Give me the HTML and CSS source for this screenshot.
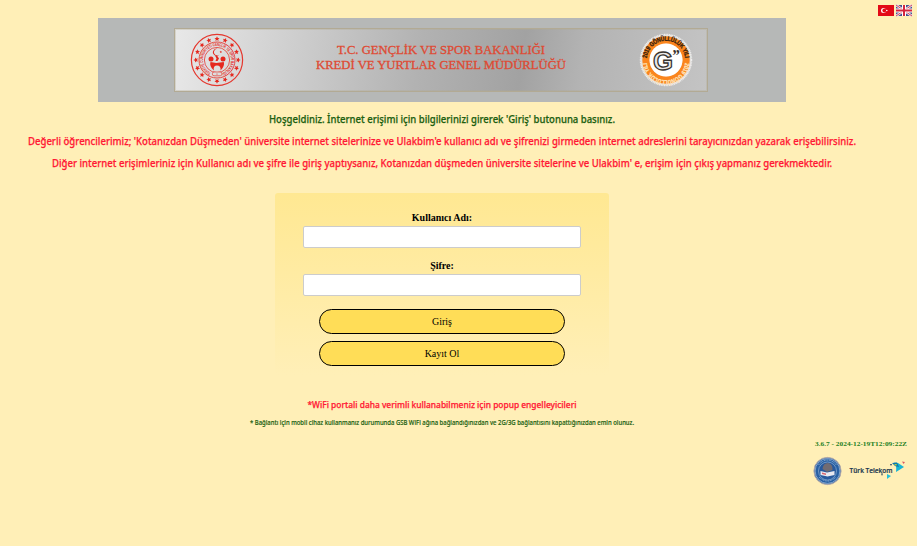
FILE: index.html
```
<!DOCTYPE html>
<html lang="tr">
<head>
<meta charset="utf-8">
<title>GSB WiFi</title>
<link rel="stylesheet" href="styles.css">
</head>
<body>
<nav class="langs">
  <svg width="16" height="11" viewBox="0 0 16 11"><rect width="16" height="11" fill="#e30a17"/><circle cx="5.500" cy="5.500" r="2.500" fill="#fff"/><circle cx="6.300" cy="5.500" r="1.900" fill="#e30a17"/><circle cx="8.800" cy="5.500" r=".8" fill="#fff"/></svg>
  <svg width="16" height="11" viewBox="0 0 16 11"><rect width="16" height="11" fill="#45508e"/><path d="M0 0L16 11M16 0L0 11" stroke="#eee4ee" stroke-width="2.600"/><path d="M0 0L16 11M16 0L0 11" stroke="#d54259" stroke-width="1"/><path d="M8 0V11M0 5.500H16" stroke="#fff" stroke-width="4"/><path d="M8 0V11M0 5.500H16" stroke="#d5253d" stroke-width="2"/></svg>
</nav>
<main class="page">
  <header class="banner">
    <div class="plate">
      <svg class="seal" width="54" height="54" viewBox="0 0 54 54">
        <defs>
          <path id="ring" d="M27 41A14 14 0 1 1 27.100 41"/>
          <path id="star" d="M0-2.500L.8-.8 2.500-.7 1.200.5 1.600 2.200 0 1.200-1.600 2.200-1.200.5-2.500-.7-.8-.8Z"/>
        </defs>
        <g fill="none" stroke="#e5372e"><circle cx="27" cy="27" r="25.600" stroke-width="1.200"/><circle cx="27" cy="27" r="18" stroke-width=".9"/><circle cx="27" cy="27" r="12.600" stroke-width=".8"/></g>
        <g fill="#e5281e">
          <use href="#star" transform="translate(27 5.800)"/><use href="#star" transform="rotate(22.500 27 27) translate(27 5.800)"/><use href="#star" transform="rotate(45 27 27) translate(27 5.800)"/><use href="#star" transform="rotate(67.500 27 27) translate(27 5.800)"/><use href="#star" transform="rotate(90 27 27) translate(27 5.800)"/><use href="#star" transform="rotate(112.500 27 27) translate(27 5.800)"/><use href="#star" transform="rotate(135 27 27) translate(27 5.800)"/><use href="#star" transform="rotate(157.500 27 27) translate(27 5.800)"/><use href="#star" transform="rotate(180 27 27) translate(27 5.800)"/><use href="#star" transform="rotate(202.500 27 27) translate(27 5.800)"/><use href="#star" transform="rotate(225 27 27) translate(27 5.800)"/><use href="#star" transform="rotate(247.500 27 27) translate(27 5.800)"/><use href="#star" transform="rotate(270 27 27) translate(27 5.800)"/><use href="#star" transform="rotate(292.500 27 27) translate(27 5.800)"/><use href="#star" transform="rotate(315 27 27) translate(27 5.800)"/><use href="#star" transform="rotate(337.500 27 27) translate(27 5.800)"/>
          <text class="ring-text"><textPath href="#ring" startOffset="6" textLength="76" lengthAdjust="spacingAndGlyphs">TÜRKİYE CUMHURİYETİ GENÇLİK VE SPOR BAKANLIĞI</textPath></text>
          <path d="M28.500 16.200A3.200 3.200 0 1 0 29.500 21.400A3.600 3.600 0 1 1 28.500 16.200Z"/>
          <use href="#star" transform="translate(30.800 19) scale(.5)"/>
          <circle cx="21" cy="26" r="2.500"/><circle cx="33" cy="26" r="2.500"/>
          <path d="M25 22.500H27L29 25.500 27.500 28H25.500L26.500 25.500Z"/>
          <path d="M20.500 29L26.300 30 33.800 29Q35 33 30.600 37.500Q31 32.500 27 32.500Q23 32.500 23.800 37.500Q19 33 20.500 29Z"/>
        </g>
        <rect x="22.400" y="39" width="9.400" height="3.800" rx="1.600" fill="#ddd" stroke="#e5372e" stroke-width=".7"/><circle cx="27" cy="41" r=".6" fill="#e5281e"/>
      </svg>
      <svg class="title" width="254" height="34" viewBox="0 0 254 34">
        <text x="22" y="14" textLength="208" lengthAdjust="spacingAndGlyphs">T.C. GENÇLİK VE SPOR BAKANLIĞI</text>
        <text x="1" y="29" textLength="250" lengthAdjust="spacingAndGlyphs">KREDİ VE YURTLAR GENEL MÜDÜRLÜĞÜ</text>
      </svg>
      <svg class="badge" width="54" height="54" viewBox="0 0 54 54">
        <defs><path id="top" d="M6.800 27A20.200 20.200 0 0 1 47.200 27"/><path id="bottom" d="M47.200 28A20.200 20.200 0 0 1 6.800 28"/></defs>
        <circle cx="27" cy="27" r="25.500" fill="#e4e0dc" stroke="#eee" stroke-width="1.500" stroke-dasharray="1 .7"/>
        <circle cx="27" cy="27" r="20" fill="none" stroke="#fa851d" stroke-width="7.400"/><circle cx="27" cy="27" r="16.500" fill="#fff"/>
        <text class="badge-top" dy="1"><textPath href="#top" startOffset="2" textLength="59" lengthAdjust="spacingAndGlyphs">2019 GÖNÜLLÜLÜK YILI</textPath></text>
        <text class="badge-bottom" dy="1"><textPath href="#bottom" startOffset="2" textLength="59" lengthAdjust="spacingAndGlyphs">2019 GÖNÜLLÜLÜK YILI</textPath></text>
        <text class="initial" x="14" y="36.500" textLength="20" lengthAdjust="spacingAndGlyphs">G</text>
        <text class="quote" x="32.500" y="27.500">”</text>
      </svg>
    </div>
  </header>

  <svg class="notices" width="884" height="66" viewBox="0 0 884 66">
    <text class="welcome" x="269" y="15" textLength="346" lengthAdjust="spacingAndGlyphs">Hoşgeldiniz. İnternet erişimi için bilgilerinizi girerek 'Giriş' butonuna basınız.</text>
    <text class="warning" x="28" y="37" textLength="828" lengthAdjust="spacingAndGlyphs">Değerli öğrencilerimiz; 'Kotanızdan Düşmeden' üniversite internet sitelerinize ve Ulakbim'e kullanıcı adı ve şifrenizi girmeden internet adreslerini tarayıcınızdan yazarak erişebilirsiniz.</text>
    <text class="warning" x="52" y="59" textLength="780" lengthAdjust="spacingAndGlyphs">Diğer internet erişimleriniz için Kullanıcı adı ve şifre ile giriş yaptıysanız, Kotanızdan düşmeden üniversite sitelerine ve Ulakbim' e, erişim için çıkış yapmanız gerekmektedir.</text>
  </svg>

  <form class="login">
    <label for="user">Kullanıcı Adı:</label>
    <input id="user" type="text">
    <label for="pass">Şifre:</label>
    <input id="pass" type="password">
    <button type="button">Giriş</button>
    <button type="button">Kayıt Ol</button>
  </form>

  <svg class="hints" width="884" height="36" viewBox="0 0 884 36">
    <text class="popup" x="307.500" y="12" textLength="269" lengthAdjust="spacingAndGlyphs">*WiFi portali daha verimli kullanabilmeniz için popup engelleyicileri</text>
    <text class="mobile" x="250" y="29" textLength="384" lengthAdjust="spacingAndGlyphs">* Bağlantı için mobil cihaz kullanmanız durumunda GSB WiFi ağına bağlandığınızdan ve 2G/3G bağlantısını kapattığınızdan emin olunuz.</text>
  </svg>
</main>
<footer class="footer">
  <svg width="100" height="54" viewBox="0 0 100 54">
    <text class="version" x="7" y="11" textLength="92" lengthAdjust="spacingAndGlyphs">3.6.7 - 2024-12-19T12:09:22Z</text>
    <circle cx="19.500" cy="36" r="13.600" fill="#2860a4" stroke="#b5aaa8" stroke-width="1"/>
    <circle cx="19.500" cy="36" r="12.400" fill="none" stroke="#dce6ee" stroke-width=".5"/>
    <circle cx="19.500" cy="36" r="9" fill="#27599d" stroke="#8fb0d2" stroke-width=".7"/>
    <path d="M14.500 34Q15 28 20 28Q25 29 24.500 35L19 37Z" fill="#716b72"/>
    <path d="M12.500 36L19 37.500 26.500 36V40L19.500 41.500 12.500 40Z" fill="#e8e8ef"/><path d="M14 37.500L18 38.500V40L14 39Z" fill="#d9656e"/>
    <path d="M11 42Q19.500 50 28 42M10.500 30Q19.500 20 28.500 30" fill="none" stroke="#b8cce0" stroke-width=".8" stroke-dasharray="1 .7"/>
    <text class="telekom" x="41.500" y="37.500" textLength="43" lengthAdjust="spacingAndGlyphs">Türk Telekom</text>
    <path d="M86 27.500L90 28 96 32 88 37Q89 31 86 27.500Z" fill="#17b4d4"/><path d="M84 28L89 27.500 91 32 87 31Z" fill="#0978ad"/><path d="M86 29L89 29 88 31Z" fill="#b2c843"/>
    <path d="M79 39L83 41 79 44Z" fill="#21c0da"/><path d="M94 26.500L97 27 95.500 29Z" fill="#dc5864"/><path d="M82 29L84 29 83 31ZM73 38.500L75 38.500 74 41Z" fill="#25415e"/>
  </svg>
</footer>
</body>
</html>
```
FILE: styles.css
```
* { box-sizing: border-box; }
body {
  margin: 0;
  height: 546px;
  overflow: hidden;
  background: #ffefb7;
  font-family: "Liberation Serif", serif;
}
svg { display: block; flex: none; overflow: visible; }
.langs {
  display: flex;
  justify-content: flex-end;
  gap: 2px;
  height: 18px;
  padding: 5px 5px 0 0;
}
.page {
  display: flex;
  flex-direction: column;
  align-items: center;
  width: 884px;
}
.banner {
  width: 688px;
  height: 84px;
  padding: 10px 78px 10px 76px;
  background: #b6b8b7;
}
.plate {
  display: flex;
  align-items: flex-start;
  height: 64px;
  padding: 4px 13px 0 15px;
  border: 1px solid #b2aa94;
  outline: 1px solid #b2aa9455;
  outline-offset: -2px;
  background: linear-gradient(98deg, #e8e8e8, #cbcbcb 25%, #b2b2b2 46%, #a2a2a2 65%, #b3b3b3 76%, #c4c4c4);
}
.title {
  margin: 7px 70px 0 71px;
  fill: #df4a33;
  stroke: #df4a33;
  stroke-width: .3px;
  font-size: 12px;
}
.ring-text { font: bold 4.500px "Liberation Sans", sans-serif; }
.badge-top { font: bold 6.500px "Liberation Sans", sans-serif; fill: #35200d; stroke: #35200d; stroke-width: .3px; }
.badge-bottom { font: bold 6.500px "Liberation Sans", sans-serif; fill: #ffe2b9; stroke: #ffe2b9; stroke-width: .3px; }
.initial { font: bold 26px "Liberation Sans", sans-serif; fill: #e8e8e8; stroke: #38342f; stroke-width: 1.300px; }
.quote { font: italic bold 16px "Liberation Serif", serif; fill: #38342f; }
.notices { margin-top: 6px; }
.notices text, .hints text {
  font-family: "Noto Sans", sans-serif;
  font-weight: 500;
  stroke-width: .25px;
}
.notices text { font-size: 11px; }
.notices .welcome { fill: #206010; stroke: #206010; }
.notices .warning { fill: #ff1834; stroke: #ff1834; }
.login {
  display: flex;
  flex-direction: column;
  align-items: center;
  width: 334px;
  height: 182px;
  margin-top: 19px;
  padding-top: 18px;
  border-radius: 3px;
  background: linear-gradient(#ffe892, #ffefb7);
}
label {
  height: 15px;
  font-size: 10px;
  line-height: 13px;
  font-weight: bold;
}
input {
  width: 278px;
  height: 22px;
  margin: 0 0 11px;
  border: 1px solid #ccc;
  border-radius: 2px;
  background: #fff;
}
#pass { margin-bottom: 13px; }
button {
  width: 246px;
  height: 25px;
  margin-bottom: 7px;
  padding: 0;
  border: 1px solid #000;
  border-radius: 13px;
  background: #ffdd57;
  color: #000;
  font: 10px "Liberation Serif", serif;
}
.hints { margin-top: 21px; }
.hints .popup { font-size: 9px; fill: #ff1834; stroke: #ff1834; }
.hints .mobile { font-size: 6.700px; fill: #206010; stroke: #206010; stroke-width: .15px; }
.footer {
  display: flex;
  justify-content: flex-end;
  padding: 3px 9px 0 0;
}
.version { font-size: 7px; font-weight: bold; fill: #238023; }
.telekom { font: 600 7.300px "Open Sans", sans-serif; fill: #21374f; stroke: #21374f; stroke-width: .2px; }
```
